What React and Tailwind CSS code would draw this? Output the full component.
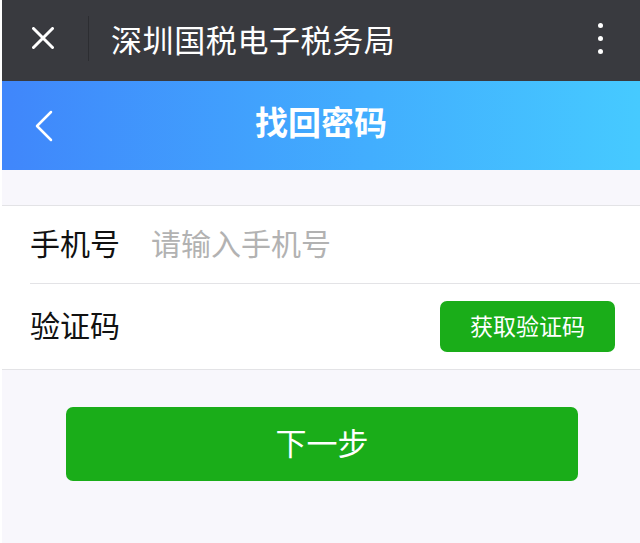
import React from "react";

export default function App() {
  const font = { fontFamily: '"Noto Sans CJK SC", "Noto Sans", sans-serif' };
  return (
    <div className="w-[640px] h-[543px] bg-white pl-[2px] overflow-hidden" style={font}>
      <div className="h-full bg-[#f8f7fc] flex flex-col">
        <div className="h-[81px] bg-[#393a3f] flex items-center shrink-0 pb-[5px]">
          <div className="ml-[30px] w-[22px] h-[22px]">
            <svg width="22" height="22" viewBox="0 0 22 22">
              <path d="M1.5 1.5 L20.5 20.5 M20.5 1.5 L1.5 20.5" stroke="#ffffff" strokeWidth="3" strokeLinecap="round" />
            </svg>
          </div>
          <div className="ml-[34px] w-px h-[45px] bg-[#2c2d31]" />
          <div className="ml-[22px] text-[31px] leading-none text-white tracking-[0.6px]">深圳国税电子税务局</div>
          <div className="ml-auto mr-[37px] flex flex-col gap-[8px]">
            <span className="block w-[5px] h-[5px] rounded-full bg-white" />
            <span className="block w-[5px] h-[5px] rounded-full bg-white" />
            <span className="block w-[5px] h-[5px] rounded-full bg-white" />
          </div>
        </div>
        <div className="h-[89px] bg-gradient-to-r from-[#4086fb] to-[#46caff] grid grid-cols-[1fr_auto_1fr] items-center shrink-0">
          <div className="pl-[32px] pt-[1px]">
            <svg width="20" height="32" viewBox="0 0 20 32">
              <path d="M17 2 L3 16 L17 30" fill="none" stroke="#ffffff" strokeWidth="2.5" strokeLinecap="round" strokeLinejoin="round" />
            </svg>
          </div>
          <div className="text-[33px] font-bold text-white leading-none pb-[8px]">找回密码</div>
          <div />
        </div>
        <div className="h-[35px] shrink-0" />
        <div className="bg-white border-y border-[#e3e3e6]">
          <div className="h-[77px] flex items-center pl-[28px] pb-[6px]">
            <span className="text-[30px] text-[#111] leading-none">手机号</span>
            <span className="ml-[31px] text-[30px] text-[#b2b2b2] leading-none">请输入手机号</span>
          </div>
          <div className="ml-[28px] h-px bg-[#e3e3e6]" />
          <div className="h-[85px] flex items-center pl-[28px] pr-[25px]">
            <span className="text-[30px] text-[#111] leading-none pb-[6px]">验证码</span>
            <div className="ml-auto w-[175px] h-[51px] rounded-[7px] bg-[#1aad19] flex items-center justify-center text-[23px] text-white leading-none pb-[3px]">
              获取验证码
            </div>
          </div>
        </div>
        <div className="mt-[37px] ml-[64px] w-[512px] h-[74px] rounded-[7px] bg-[#1aad19] flex items-center justify-center text-[31px] text-white leading-none pb-[6px]">
          下一步
        </div>
      </div>
    </div>
  );
}
